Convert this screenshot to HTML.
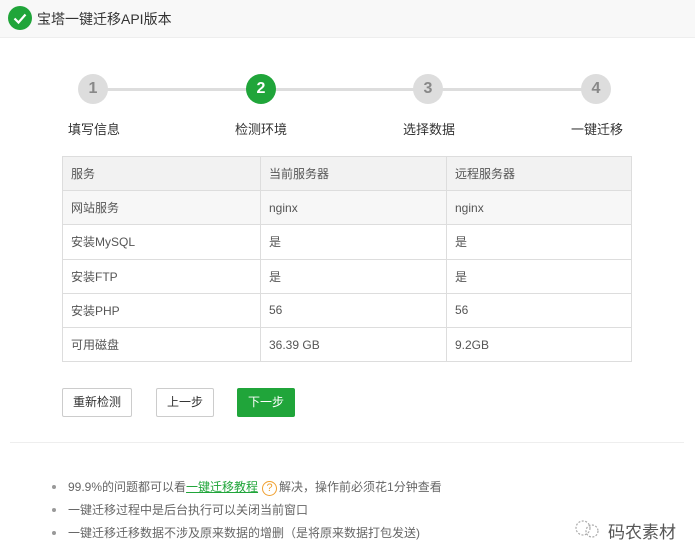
<!DOCTYPE html>
<html><head><meta charset="utf-8"><style>
*{margin:0;padding:0;box-sizing:border-box}
body{width:695px;height:559px;background:#fff;font-family:"Liberation Sans","Noto Sans CJK SC",sans-serif;color:#555;position:relative;overflow:hidden;font-size:12px}
.hd{position:absolute;left:0;top:0;width:695px;height:38px;background:#f8f8f8;border-bottom:1px solid #eee}
.hd .ic{position:absolute;left:8px;top:6px;width:24px;height:24px;border-radius:50%;background:#20a53a}
.hd .t{position:absolute;left:37px;top:9px;font-size:14px;color:#333}
.line{position:absolute;top:88px;height:3px;background:#ddd}
.c{position:absolute;top:74px;width:30px;height:30px;border-radius:50%;background:#ddd;color:#888;font-weight:bold;font-size:16px;text-align:center;line-height:30px}
.c.on{background:#20a53a;color:#fff}
.lb{position:absolute;top:119px;width:80px;text-align:center;font-size:13px;color:#333}
table{position:absolute;left:62px;top:156px;border-collapse:collapse;width:570px}
td{border:1px solid #ddd;height:34.2px;padding:0 8px;font-size:12px;color:#555}
tr.h td{background:#f2f2f2}
tr.g td{background:#f7f7f7}
.btn{position:absolute;top:388px;height:29px;border:1px solid #ccc;border-radius:2px;font-size:12px;line-height:27px;text-align:center;color:#333;background:#fff}
.btn.g{background:#20a53a;border-color:#20a53a;color:#fff}
.div{position:absolute;left:10px;top:442px;width:674px;height:1px;background:#eee}
.li{position:absolute;left:68px;font-size:12px;color:#666}
.li:before{content:"";position:absolute;left:-16px;top:7px;width:4px;height:4px;border-radius:50%;background:#999}
.li a{color:#20a53a;text-decoration:underline}
.q{display:inline-block;width:15px;height:15px;border:1px solid #f0a030;border-radius:50%;color:#f0a030;font-size:11px;line-height:13px;text-align:center;margin:0 2px 0 4px}
.wm{position:absolute;left:608px;top:518px;font-size:17px;color:#555}
.wmi{position:absolute;left:574px;top:520px;width:26px;height:18px}
</style></head><body>
<div class="hd"><div class="ic"><svg width="24" height="24"><path d="M6.5 12.5l4 4 7-8" stroke="#fff" stroke-width="2.2" fill="none"/></svg></div><div class="t">宝塔一键迁移API版本</div></div>
<div class="line" style="left:93px;width:503px"></div>
<div class="c" style="left:78px">1</div>
<div class="c on" style="left:246px">2</div>
<div class="c" style="left:413px">3</div>
<div class="c" style="left:581px">4</div>
<div class="lb" style="left:54px">填写信息</div>
<div class="lb" style="left:221px">检测环境</div>
<div class="lb" style="left:389px">选择数据</div>
<div class="lb" style="left:557px">一键迁移</div>
<table>
<tr class="h"><td style="width:198px">服务</td><td style="width:186px">当前服务器</td><td>远程服务器</td></tr>
<tr class="g"><td>网站服务</td><td>nginx</td><td>nginx</td></tr>
<tr><td>安装MySQL</td><td>是</td><td>是</td></tr>
<tr><td>安装FTP</td><td>是</td><td>是</td></tr>
<tr><td>安装PHP</td><td>56</td><td>56</td></tr>
<tr><td>可用磁盘</td><td>36.39 GB</td><td>9.2GB</td></tr>
</table>
<div class="btn" style="left:62px;width:70px">重新检测</div>
<div class="btn" style="left:156px;width:58px">上一步</div>
<div class="btn g" style="left:237px;width:58px">下一步</div>
<div class="div"></div>
<div class="li" style="top:478px">99.9%的问题都可以看<a>一键迁移教程</a><span class="q">?</span>解决，操作前必须花1分钟查看</div>
<div class="li" style="top:501px">一键迁移过程中是后台执行可以关闭当前窗口</div>
<div class="li" style="top:524px">一键迁移迁移数据不涉及原来数据的增删（是将原来数据打包发送)</div>
<svg class="wmi" viewBox="0 0 26 18"><circle cx="9" cy="8" r="7" fill="none" stroke="#aaa" stroke-width="1.2" stroke-dasharray="2 1.5"/><circle cx="18" cy="11" r="6" fill="none" stroke="#aaa" stroke-width="1.2" stroke-dasharray="2 1.5"/></svg>
<div class="wm">码农素材</div>
</body></html>
